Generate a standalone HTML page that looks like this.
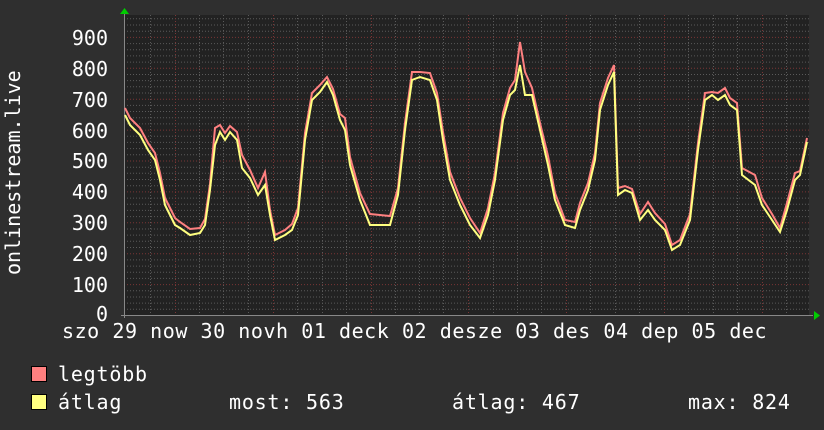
<!DOCTYPE html>
<html><head><meta charset="utf-8"><style>
body{margin:0;background:#2f2f2f;width:824px;height:430px;overflow:hidden;position:relative;font-family:"DejaVu Sans Mono","Liberation Mono",monospace;color:#fff}
.t{position:absolute;font-size:20px;line-height:20px;white-space:pre}
.lg{letter-spacing:0.8px}
.yl{position:absolute;right:716px;font-size:20px;line-height:20px}
.sq{position:absolute;width:14px;height:14px;border:1px solid #000;left:31px}
</style></head><body>
<svg width="824" height="430" style="position:absolute;left:0;top:0">
<rect x="124" y="15" width="685" height="300" fill="#222"/>
<g stroke="#5a5a5a" stroke-width="1" stroke-dasharray="1,2">
<path d="M124 309.3H809M124 303.1H809M124 297H809M124 290.8H809M124 278.4H809M124 272.2H809M124 266.1H809M124 259.9H809M124 247.5H809M124 241.3H809M124 235.1H809M124 229H809M124 216.6H809M124 210.4H809M124 204.2H809M124 198.1H809M124 185.7H809M124 179.5H809M124 173.3H809M124 167.2H809M124 154.8H809M124 148.6H809M124 142.4H809M124 136.3H809M124 123.9H809M124 117.7H809M124 111.5H809M124 105.4H809M124 93H809M124 86.8H809M124 80.6H809M124 74.5H809M124 62.1H809M124 55.9H809M124 49.7H809M124 43.6H809M124 31.2H809M124 25H809M124 18.8H809"/>
<path d="M150.5 15V315M199.5 15V315M223.5 15V315M248.5 15V315M297.5 15V315M322.5 15V315M346.5 15V315M395.5 15V315M419.5 15V315M443.5 15V315M493.5 15V315M517.5 15V315M541.5 15V315M590.5 15V315M615.5 15V315M639.5 15V315M688.5 15V315M713.5 15V315M737.5 15V315M786.5 15V315"/>
</g>
<g stroke="#7a3535" stroke-width="1" stroke-dasharray="1,2">
<path d="M124 284.6H809M124 253.7H809M124 222.8H809M124 191.9H809M124 161H809M124 130.1H809M124 99.2H809M124 68.3H809M124 37.4H809"/>
<path d="M175.5 15V315M273.5 15V315M371.5 15V315M468.5 15V315M566.5 15V315M664.5 15V315M762.5 15V315"/>
</g>
<path d="M124.5 12V318M121 315.5H813" stroke="#888" stroke-width="1"/>
<path d="M120 14L124.5 8L129 14Z M814 311L820 315.5L814 320Z" fill="#0c0"/>
<polyline fill="none" stroke="#ff8080" stroke-width="2" points="125,108 130,118 140,128 148,143 155,153 160,173 165,198 170,208 175,218 180,222 190,229 200,228 205,219 210,184 215,128 220,125 225,133 230,126 237,132 242,155 250,170 258,188 265,172 270,210 275,235 285,230 292,224 298,208 305,133 312,93 320,85 327,77 333,89 340,114 345,118 350,157 360,193 370,214 380,215 390,216 398,188 405,123 412,72 420,72 430,73 437,93 443,132 450,172 460,198 470,218 480,233 488,208 495,173 503,113 510,88 515,80 520,42 525,72 532,88 540,123 548,156 555,193 565,220 575,222 580,203 588,183 595,153 600,103 608,78 614,65 618,188 625,186 632,189 640,214 648,202 655,213 665,224 672,245 680,240 690,214 698,143 705,93 712,92 718,93 725,88 730,98 737,103 742,168 755,175 762,198 772,214 780,228 787,203 795,173 800,171 807,138"/>
<polyline fill="none" stroke="#ffff80" stroke-width="2" points="125,115 130,125 140,135 148,150 155,160 160,180 165,205 170,215 175,225 180,228 190,235 200,233 205,225 210,190 215,145 220,132 225,140 230,132 237,140 242,168 250,178 258,195 265,185 270,215 275,240 285,235 292,230 298,215 305,140 312,100 320,92 327,82 333,95 340,120 345,130 350,165 360,200 370,225 380,225 390,225 398,195 405,130 412,80 420,77 430,80 437,100 443,140 450,180 460,205 470,225 480,238 488,215 495,180 503,120 510,95 515,90 520,65 525,95 532,95 540,130 548,165 555,200 565,225 575,228 580,210 588,190 595,160 600,110 608,85 614,72 618,195 625,190 632,193 640,220 648,210 655,220 665,230 672,250 680,245 690,220 698,150 705,100 712,95 718,100 725,95 730,105 737,110 742,175 755,185 762,205 772,220 780,232 787,210 795,180 800,175 807,142"/>
</svg>
<div class="t" style="left:3px;top:275px;transform-origin:0 0;transform:rotate(-90deg)">onlinestream.live</div>
<div class="yl" style="top:28px">900</div>
<div class="yl" style="top:59px">800</div>
<div class="yl" style="top:90px">700</div>
<div class="yl" style="top:121px">600</div>
<div class="yl" style="top:151px">500</div>
<div class="yl" style="top:182px">400</div>
<div class="yl" style="top:213px">300</div>
<div class="yl" style="top:244px">200</div>
<div class="yl" style="top:275px">100</div>
<div class="yl" style="top:304px">0</div>
<div class="t" style="left:62px;top:321px;letter-spacing:0.55px">szo 29 now 30 novh 01 deck 02 desze 03 des 04 dep 05 dec</div>
<div class="sq" style="top:366px;background:#ff8080"></div>
<div class="sq" style="top:394px;background:#ffff80"></div>
<div class="t lg" style="left:58px;top:364px">legtöbb</div>
<div class="t lg" style="left:58px;top:392px">átlag</div>
<div class="t lg" style="left:229px;top:392px">most: 563</div>
<div class="t lg" style="left:452px;top:392px">átlag: 467</div>
<div class="t lg" style="left:688px;top:392px">max: 824</div>
</body></html>
